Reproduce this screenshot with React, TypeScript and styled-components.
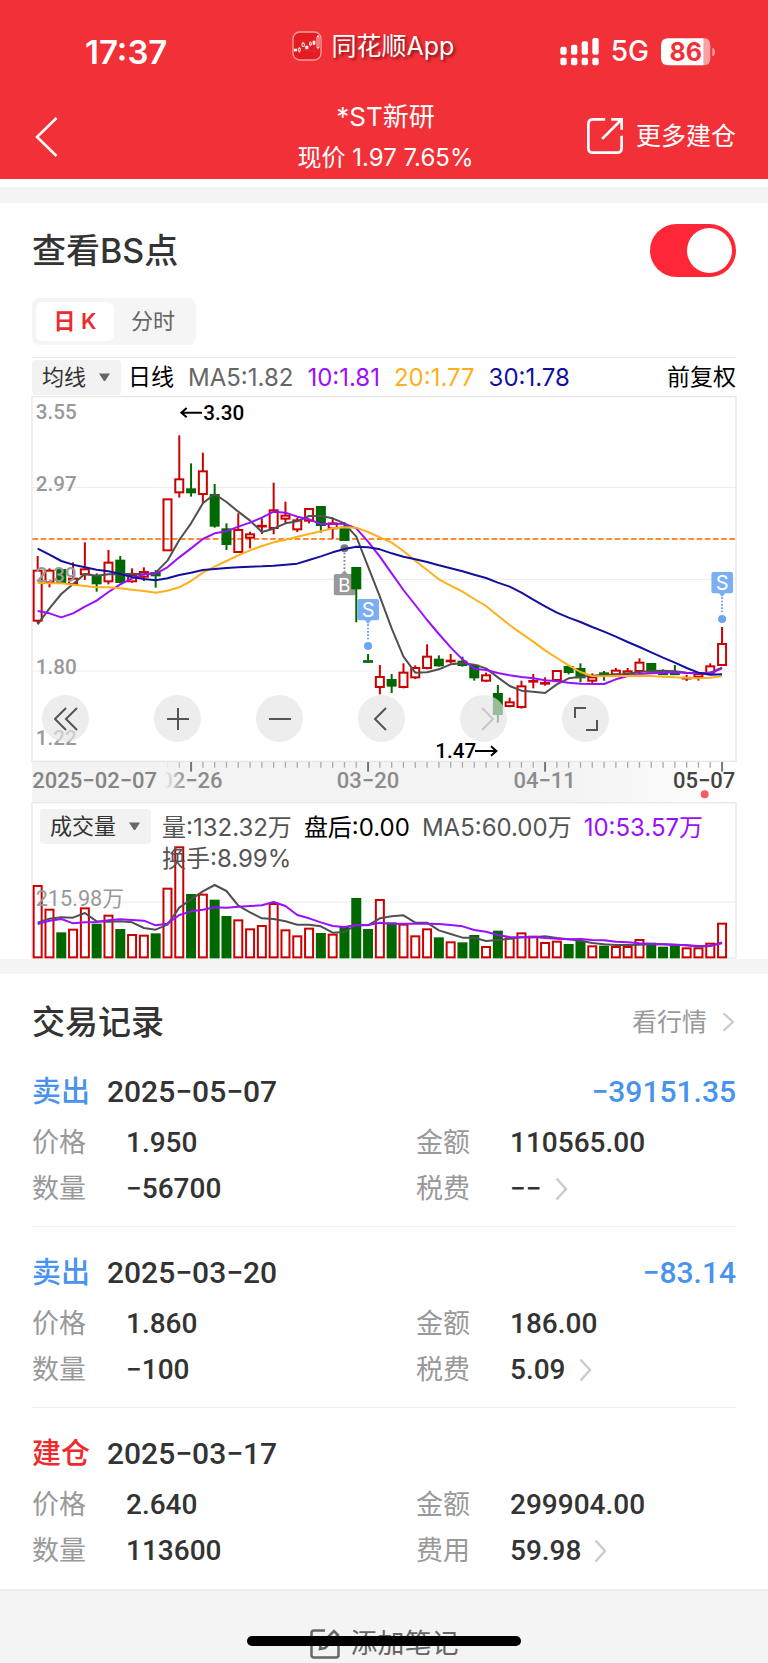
import React, { useState } from 'react';
import styled, { createGlobalStyle } from 'styled-components';

const GlobalStyle = createGlobalStyle`
  *, *::before, *::after { box-sizing: border-box; }
  body {
    margin: 0;
    background: #fff;
    color: #333;
    font-family: Inter, "Noto Sans CJK SC", sans-serif;
    line-height: 1.2;
  }
  button, select { font: inherit; color: inherit; border: 0; background: none; padding: 0; margin: 0; cursor: pointer; }
  a { color: inherit; text-decoration: none; }
  h1, h2, p, dl, dd, dt { margin: 0; font-weight: 400; }
`;

const NUM_FONT = 'Roboto, "Noto Sans CJK SC", sans-serif';
const RED = '#cc0000';
const GREEN = '#006800';
const MA_GRAY = '#505050';
const MA_PURPLE = '#9b0fff';
const MA_ORANGE = '#ffb01a';
const MA_NAVY = '#1310a0';

/* ---------- header ---------- */

const Header = styled.header`
  background: #f23038;
  color: #fff;
`;

const StatusBar = styled.div`
  display: grid;
  grid-template-columns: 208fr 268fr auto;
  align-items: center;
  height: 95px;
  padding: 8px 52px 0 85px;
`;

const Clock = styled.time`
  font-size: 33px;
  font-weight: 600;
  line-height: 40px;
`;

const AppBadge = styled.div`
  display: flex;
  align-items: center;
  gap: 9px;
  padding-bottom: 12px;
  font-size: 25px;
  line-height: 32px;
  text-shadow: 2px 2px 3px rgba(60, 0, 0, 0.6);
`;

const StatusIcons = styled.div`
  display: flex;
  align-items: center;
  gap: 12px;
  font-size: 28px;
  font-weight: 500;
`;

const NavBar = styled.nav`
  display: grid;
  grid-template-columns: 1fr auto 1fr;
  align-items: center;
  height: 84px;
  padding: 0 32px 0 35px;
`;

const BackButton = styled.button`
  display: flex;
  justify-self: start;
`;

const StockTitle = styled.div`
  text-align: center;
  h1 { font-size: 26px; line-height: 42px; }
  p { font-size: 24px; line-height: 40px; }
`;

const MoreLink = styled.a`
  display: flex;
  align-items: center;
  justify-self: end;
  gap: 13px;
  padding-bottom: 2px;
  font-size: 25px;
`;

/* ---------- sections ---------- */

const Band = styled.div<{ $top?: boolean }>`
  height: ${(p) => (p.$top ? 24 : 15)}px;
  border-top: ${(p) => (p.$top ? '8px solid #fff' : '0')};
  background: #f4f4f4;
`;

const Section = styled.section`
  padding: 0 32px;
`;

const SwitchRow = styled.label`
  display: flex;
  align-items: center;
  justify-content: space-between;
  padding-top: 21px;
  font-size: 34px;
  font-weight: 500;
  line-height: 53px;
`;

const Toggle = styled.input`
  appearance: none;
  width: 86px;
  height: 53px;
  margin: 0;
  padding: 4px;
  border-radius: 27px;
  background: #ccc;
  cursor: pointer;
  display: flex;
  &::before {
    content: '';
    width: 45px;
    height: 45px;
    border-radius: 50%;
    background: #fff;
  }
  &:checked { background: #ff2737; justify-content: flex-end; }
`;

const Tabs = styled.div`
  display: inline-flex;
  margin: 21px 0 12px;
  padding: 4px;
  border-radius: 8px;
  background: #f5f5f5;
  vertical-align: top;
`;

const Tab = styled.button<{ $active: boolean }>`
  width: 78px;
  height: 39px;
  border-radius: 6px;
  font-size: 22px;
  font-weight: ${(p) => (p.$active ? 600 : 400)};
  color: ${(p) => (p.$active ? '#ee2a2e' : '#666')};
  background: ${(p) => (p.$active ? '#fff' : 'transparent')};
`;

const Legend = styled.div`
  display: flex;
  align-items: center;
  height: 39px;
  border-top: 1px solid #e8e8e8;
  gap: 14px;
`;

const LegendItem = styled.span<{ $color: string; $small?: boolean; $push?: boolean }>`
  color: ${(p) => p.$color};
  font-size: ${(p) => (p.$small ? 23 : 24)}px;
  line-height: 31px;
  white-space: nowrap;
  margin-left: ${(p) => (p.$push ? 'auto' : '0')};
`;

const Picker = styled.span<{ $tight?: boolean }>`
  display: grid;
  align-items: center;
  height: 35px;
  border-radius: 4px;
  background: #f2f2f2;
  margin-right: ${(p) => (p.$tight ? '-7px' : '0')};
  & > * { grid-area: 1 / 1; }
  select {
    appearance: none;
    height: 35px;
    padding: 0 34px 0 10px;
    font-size: 22px;
    color: #333;
  }
  svg { justify-self: end; margin-right: 10px; pointer-events: none; }
`;

/* ---------- charts ---------- */

const ChartBlock = styled.div`
  margin: 0 -1px;
`;

const Stack = styled.div`
  display: grid;
  & > * { grid-area: 1 / 1; min-width: 0; }
`;

const ChartSvg = styled.svg`
  display: block;
  width: 100%;
  height: auto;
  overflow: visible;
`;

const ChartControls = styled.div`
  display: flex;
  align-self: end;
  gap: 55px;
  padding: 0 0 20px 11px;
`;

const RoundButton = styled.button`
  display: flex;
  width: 47px;
  height: 47px;
  border-radius: 50%;
  background: rgba(228, 228, 228, 0.68);
  color: #555;
  align-items: center;
  justify-content: center;
  &:first-child { margin-right: 10px; }
  &:disabled { color: #c8c8c8; }
`;

const VolumeHead = styled.div`
  display: flex;
  align-items: flex-start;
  align-self: start;
  gap: 11px;
  padding: 7px 10px 0 9px;
`;

const VolumeStats = styled.div`
  display: flex;
  flex-wrap: wrap;
  column-gap: 12px;
  padding-top: 3px;
`;

/* ---------- records ---------- */

const RecordsHead = styled.div`
  display: flex;
  align-items: center;
  justify-content: space-between;
  padding: 28px 0 4px;
  line-height: 40px;
  h2 { font-size: 33px; font-weight: 500; }
  a { display: flex; align-items: center; gap: 15px; font-size: 25px; color: #999; padding-right: 1px; }
`;

const RecordItem = styled.article`
  padding: 26px 0 14px;
  border-bottom: 1px solid #efefef;
  &:last-child { border-color: transparent; }
`;

const RecordTop = styled.div`
  display: flex;
  align-items: center;
  gap: 17px;
  line-height: 40px;
  margin-bottom: 8px;
  font-family: ${NUM_FONT};
  font-size: 30px;
  font-weight: 500;
`;

const Action = styled.span<{ $color: string }>`
  color: ${(p) => p.$color};
  font-size: 29px;
`;

const Profit = styled.span`
  margin-left: auto;
  color: #4793ee;
`;

const Fields = styled.dl`
  display: grid;
  grid-template-columns: 6fr 5fr;
`;

const Field = styled.div`
  display: flex;
  align-items: center;
  line-height: 46px;
  dt { width: 94px; font-size: 27px; color: #999; }
  dd {
    display: flex;
    align-items: center;
    gap: 13px;
    font-family: ${NUM_FONT};
    font-size: 28px;
    font-weight: 500;
  }
`;

const Footer = styled.footer`
  position: relative;
  display: flex;
  justify-content: center;
  align-items: flex-end;
  height: 74px;
  background: #f4f4f4;
  border-top: 2px solid #efefef;
`;

const NoteButton = styled.button`
  display: flex;
  align-items: center;
  gap: 11px;
  height: 38px;
  font-size: 27px;
  color: #666;
`;

const HomeIndicator = styled.div`
  position: absolute;
  bottom: 17px;
  left: 50%;
  width: 274px;
  height: 10px;
  margin-left: -137px;
  border-radius: 5px;
  background: #000;
`;

/* ---------- data ---------- */

// Chart drawings use three units to a pixel; days are STEP units apart.
const STEP = 35.4;
const dayX = (i: number) => 20 + i * STEP;

type Candle = [dir: 'r' | 'g', high: number, top: number, bottom: number, low: number];

const CANDLES: Candle[] = [
  ['r', 498, 542, 692, 700], ['r', 535, 542, 577, 592], ['g', 540, 540, 577, 577], ['r', 517, 566, 582, 585],
  ['r', 457, 538, 553, 570], ['g', 550, 558, 580, 605], ['r', 480, 518, 574, 583], ['g', 498, 512, 576, 580],
  ['r', 535, 555, 574, 578], ['r', 532, 546, 560, 573], ['g', 540, 549, 556, 593], ['r', 328, 328, 481, 481],
  ['r', 136, 268, 307, 323], ['g', 220, 298, 307, 320], ['r', 188, 244, 312, 340], ['g', 282, 315, 407, 413],
  ['g', 400, 418, 462, 480], ['r', 370, 420, 486, 489], ['r', 425, 433, 443, 475], ['r', 385, 407, 410, 432],
  ['r', 278, 361, 414, 433], ['r', 335, 377, 386, 400], ['r', 383, 391, 418, 426], ['r', 355, 357, 392, 400],
  ['g', 351, 351, 405, 428], ['r', 383, 400, 415, 446], ['g', 397, 413, 450, 450], ['g', 534, 534, 595, 697],
  ['g', 792, 812, 817, 817], ['r', 825, 861, 891, 913], ['g', 852, 870, 887, 909], ['r', 820, 848, 891, 895],
  ['r', 826, 834, 862, 867], ['r', 763, 800, 834, 838], ['g', 796, 809, 826, 830], ['r', 792, 812, 814, 820],
  ['g', 800, 815, 825, 830], ['g', 825, 827, 862, 872], ['r', 848, 856, 872, 876], ['g', 885, 912, 972, 998],
  ['r', 923, 937, 948, 952], ['r', 872, 889, 951, 956], ['r', 852, 872, 876, 895], ['r', 862, 878, 882, 887],
  ['r', 843, 843, 870, 870], ['g', 827, 831, 846, 853], ['g', 820, 837, 862, 877], ['r', 850, 862, 872, 884],
  ['g', 843, 850, 856, 872], ['r', 834, 842, 853, 855], ['r', 834, 844, 851, 855], ['r', 805, 818, 843, 846],
  ['g', 822, 822, 845, 845], ['g', 838, 849, 854, 854], ['g', 825, 849, 854, 854], ['r', 855, 862, 867, 873],
  ['r', 850, 853, 861, 872], ['r', 820, 829, 848, 850], ['r', 711, 762, 825, 825],
];

const MA5 = [703, 655, 612, 582, 552, 557, 553, 553, 551, 553, 548, 512, 450, 400, 340, 312, 336, 365, 392, 426, 416, 400, 394, 378, 378, 385, 400, 440, 530, 620, 715, 800, 848, 847, 838, 823, 820, 824, 835, 862, 888, 902, 905, 909, 883, 865, 860, 857, 854, 854, 852, 846, 843, 842, 844, 848, 850, 848, 833];
const MA10 = [663, 670, 682, 670, 650, 632, 606, 583, 565, 553, 551, 532, 502, 475, 447, 430, 424, 410, 398, 383, 365, 368, 380, 388, 402, 402, 401, 415, 455, 500, 550, 600, 645, 690, 732, 772, 808, 836, 840, 849, 856, 861, 865, 871, 874, 878, 881, 882, 882, 868, 858, 852, 850, 848, 847, 849, 850, 850, 835];
const MA20 = [579, 580, 580, 584, 588, 592, 592, 595, 599, 603, 608, 602, 592, 573, 548, 530, 513, 496, 481, 468, 457, 449, 440, 432, 424, 415, 412, 413, 426, 442, 458, 483, 512, 540, 568, 587, 605, 627, 648, 677, 705, 731, 755, 781, 804, 826, 846, 858, 859, 858, 858, 857, 858, 860, 862, 863, 865, 863, 859];
const MA30 = [476, 494, 513, 524, 532, 539, 544, 552, 561, 567, 571, 565, 555, 548, 540, 537, 534, 532, 530, 529, 527, 524, 521, 510, 499, 487, 477, 470, 472, 478, 490, 500, 508, 516, 526, 535, 544, 554, 564, 578, 590, 608, 629, 649, 668, 683, 696, 711, 725, 740, 756, 771, 787, 803, 818, 834, 848, 854, 853];

const VOLUME_TOPS = [706, 777, 848, 837, 773, 822, 795, 838, 853, 855, 851, 714, 590, 733, 732, 750, 799, 809, 836, 826, 760, 839, 857, 834, 850, 852, 831, 745, 838, 748, 818, 822, 857, 836, 863, 875, 878, 856, 889, 843, 863, 848, 858, 877, 873, 883, 873, 887, 888, 889, 889, 868, 879, 891, 887, 893, 893, 879, 819];
const VOLUME_MA5 = [818, 806, 802, 803, 789, 814, 815, 814, 817, 834, 839, 824, 773, 748, 724, 705, 723, 767, 787, 805, 807, 814, 824, 824, 829, 848, 846, 825, 826, 805, 799, 796, 818, 818, 841, 852, 863, 863, 873, 870, 866, 862, 862, 859, 864, 868, 872, 879, 883, 885, 885, 884, 882, 883, 884, 886, 890, 888, 877];
const VOLUME_MA10 = [822, 812, 807, 820, 817, 816, 811, 808, 810, 812, 826, 821, 795, 784, 779, 772, 773, 770, 768, 766, 756, 768, 795, 805, 817, 828, 831, 825, 825, 818, 822, 821, 821, 821, 822, 825, 829, 840, 845, 855, 861, 862, 861, 864, 866, 868, 867, 870, 871, 875, 877, 880, 882, 883, 884, 886, 888, 887, 880];

interface TradeRecord {
  action: string;
  color: string;
  date: string;
  profit?: string;
  price: string;
  amount: string;
  quantity: string;
  feeLabel: string;
  fee: string;
}

const RECORDS: TradeRecord[] = [
  { action: '卖出', color: '#4793ee', date: '2025−05−07', profit: '−39151.35', price: '1.950', amount: '110565.00', quantity: '−56700', feeLabel: '税费', fee: '−−' },
  { action: '卖出', color: '#4793ee', date: '2025−03−20', profit: '−83.14', price: '1.860', amount: '186.00', quantity: '−100', feeLabel: '税费', fee: '5.09' },
  { action: '建仓', color: '#ee2a2e', date: '2025−03−17', price: '2.640', amount: '299904.00', quantity: '113600', feeLabel: '费用', fee: '59.98' },
];

/* ---------- drawings ---------- */

const linePoints = (values: number[]) => values.map((y, i) => `${dayX(i)},${y}`).join(' ');

const MaLine = ({ values, color }: { values: number[]; color: string }) => (
  <polyline points={linePoints(values)} fill="none" stroke={color} strokeWidth={6} strokeLinejoin="round" />
);

const Caret = () => (
  <svg width="13" height="9" viewBox="0 0 13 9" aria-hidden="true">
    <path d="M1 .5h11L7.500 7.500q-1 1-2 0z" fill="#666" />
  </svg>
);

const Chevron = ({ height }: { height: number }) => (
  <svg width="13" height={height} viewBox="0 0 13 24" preserveAspectRatio="none" fill="none" stroke="#ccc" strokeWidth="2.500" aria-hidden="true">
    <path d="M1.500 1.500 11 12 1.500 22.500" />
  </svg>
);

const AppLogo = () => (
  <svg width="30" height="30" viewBox="0 0 90 90" aria-hidden="true">
    <rect x="3" y="3" width="84" height="84" rx="20" fill="#e41c22" stroke="#ff9da0" strokeWidth="4" />
    <path d="M5 30h80M5 60h80M66 5v80" stroke="#ea3539" strokeWidth="1.500" />
    <g fill="#fff">
      <path d="M6 53h9v8H6zM40 44h9v11h-9zM62 29h8v12h-8z" />
    </g>
    <g fill="none" stroke="#fff" strokeWidth="2.500">
      <path d="M19 52h6v8h-6zM22 48v4M22 60v5M30 37h7v9h-7zM33 33v4M53 35h5v7h-5zM55 32v3M55 42v4M75 17h6v33h-6zM78 12v5M78 50v5" />
    </g>
  </svg>
);

const Signal = () => (
  <svg width="39" height="28" viewBox="0 0 117 84" fill="#fff" aria-hidden="true">
    {[26, 20, 10, 0].map((top, i) => (
      <g key={top}>
        <rect x={1 + i * 32} y={top} width="19" height={50 - top} rx="6" />
        <rect x={1 + i * 32} y="59" width="19" height="23" rx="6" />
      </g>
    ))}
  </svg>
);

const Battery = () => (
  <svg width="55" height="28" viewBox="0 0 165 84" aria-label="86%">
    <path d="M128 1h2q18 0 18 22v38q0 21-18 21h-2z" fill="#fba0a3" />
    <path d="M22 1h106v81H22Q0 82 0 61V23Q0 1 22 1z" fill="#fff" />
    <path d="M154 29q8 3 8 13t-8 13z" fill="#fba0a3" />
    <text x="74" y="68" textAnchor="middle" fontFamily="Inter" fontWeight="700" fontSize="75" fill="#f23038">86</text>
  </svg>
);

const ExportIcon = () => (
  <svg width="36" height="36" viewBox="0 0 107 107" fill="none" stroke="#fff" strokeWidth="8" aria-hidden="true">
    <path d="M54 4H18Q4 4 4 18v71q0 14 14 14h71q14 0 14-14V53M45 62 102 5M72 4h31v31" />
  </svg>
);

const NoteIcon = () => (
  <svg width="30" height="30" viewBox="0 0 30 30" fill="none" stroke="#666" strokeWidth="2.500" aria-hidden="true">
    <path d="M15 1.500H4Q1.500 1.500 1.500 4v22q0 2.500 2.500 2.500h22q2.500 0 2.500-2.500V13" />
    <path d="M10 20l1-5L24 2l4 4-13 13z" />
  </svg>
);

const SMarker = ({ x, y }: { x: number; y: number }) => (
  <g>
    <rect x={x - 32} y={y} width="65" height="64" rx="6" fill="#7baef3" />
    <path d={`M${x - 10} ${y + 63}h20l-10 12z`} fill="#7baef3" />
    <line x1={x} x2={x} y1={y + 76} y2={y + 124} stroke="#68a5f2" strokeWidth="6" strokeDasharray="5 5" />
    <circle cx={x} cy={y + 141} r="12" fill="#68a5f2" />
    <text x={x} y={y + 54} textAnchor="middle" fontFamily="Inter" fontSize="60" fill="#fff">S</text>
  </g>
);

const BMarker = ({ x }: { x: number }) => (
  <g>
    <circle cx={x} cy="475" r="12" fill="#777" />
    <line x1={x} x2={x} y1="488" y2="540" stroke="#888" strokeWidth="6" strokeDasharray="5 6" />
    <path d={`M${x - 10} 553h20l-10-12z`} fill="#999" />
    <rect x={x - 32} y="552" width="66" height="64" rx="6" fill="#999" />
    <text x={x} y="605" textAnchor="middle" fontFamily="Inter" fontSize="56" fill="#fff">B</text>
  </g>
);

const CandleShape = ({ index, candle }: { index: number; candle: Candle }) => {
  const [dir, high, top, bottom, low] = candle;
  const x = dayX(index);
  const color = dir === 'r' ? RED : GREEN;
  const thin = bottom - top < 6;
  return (
    <g stroke={color} strokeWidth="6" fill="none">
      {high < top && <line x1={x} x2={x} y1={high} y2={top} />}
      {low > bottom && <line x1={x} x2={x} y1={bottom} y2={low} />}
      {thin ? (
        <line x1={x - 15} x2={x + 15} y1={(top + bottom) / 2} y2={(top + bottom) / 2} strokeWidth="8" />
      ) : (
        <rect x={x - 12} y={top} width="24" height={bottom - top} fill={dir === 'g' ? GREEN : 'none'} />
      )}
    </g>
  );
};

const PRICE_LABELS: [string, number][] = [['3.55', 86], ['2.97', 302], ['2.39', 577], ['1.80', 851], ['1.22', 1066]];

const PriceChart = () => (
  <ChartSvg viewBox="0 18 2118 1098" role="img" aria-label="日K">
    <rect x="3" y="20" width="2112" height="1094" fill="none" stroke="#e8e8e8" strokeWidth="4" />
    {[293, 568, 843].map((y) => (
      <line key={y} x1="4" x2="2114" y1={y} y2={y} stroke="#ebebeb" strokeWidth="3" />
    ))}
    <line x1="4" x2="2116" y1="447" y2="447" stroke="#ff8c34" strokeWidth="6" strokeDasharray="17 7.600" />
    <BMarker x={dayX(26)} />
    {CANDLES.map((candle, i) => (
      <CandleShape key={i} index={i} candle={candle} />
    ))}
    <g fontFamily="Roboto" fontSize="62" fontWeight="500" fill="#999">
      {PRICE_LABELS.map(([label, y]) => (
        <text key={label} x="14" y={y}>{label}</text>
      ))}
    </g>
    <MaLine values={MA5} color={MA_GRAY} />
    <MaLine values={MA10} color={MA_PURPLE} />
    <MaLine values={MA20} color={MA_ORANGE} />
    <MaLine values={MA30} color={MA_NAVY} />
    <SMarker x={dayX(28)} y={627} />
    <SMarker x={dayX(58)} y={546} />
    <g fontFamily="Roboto" fontSize="62" fontWeight="500" fill="#000">
      <text x="517" y="91">3.30</text>
      <text x="1213" y="1104">1.47</text>
    </g>
    <path d="M513 68h-62m16-14-16 14 16 14M1332 1083h64m-16-14 16 14-16 14" fill="none" stroke="#000" strokeWidth="6" />
  </ChartSvg>
);

const DATE_LABELS: [string, number, string][] = [
  ['02−26', 481, '#8c8c8c'],
  ['03−20', 1011, '#8c8c8c'],
  ['04−11', 1541, '#8c8c8c'],
];

const DateAxis = () => (
  <ChartSvg viewBox="0 1116 2118 120" role="img" aria-label="日期">
    <defs>
      <linearGradient id="axisBand" x1="0" x2="1" y1="0" y2="0">
        <stop offset="0" stopColor="#f3f3f3" />
        <stop offset="0.750" stopColor="#f3f3f3" />
        <stop offset="1" stopColor="#ffffff" />
      </linearGradient>
      <linearGradient id="axisFade" x1="0" x2="1" y1="0" y2="0">
        <stop offset="0" stopColor="#f3f3f3" />
        <stop offset="0.860" stopColor="#f3f3f3" />
        <stop offset="1" stopColor="#f3f3f3" stopOpacity="0" />
      </linearGradient>
    </defs>
    <rect x="4" y="1116" width="2112" height="120" fill="url(#axisBand)" />
    {CANDLES.map((_, i) => {
      const major = [13, 28, 43, 58].includes(i);
      return (
        <line key={i} x1={dayX(i)} x2={dayX(i)} y1="1116" y2={major ? 1145 : 1133} stroke={major ? '#777' : '#aaa'} strokeWidth={major ? 6 : 4} />
      );
    })}
    <g fontFamily="Roboto" fontSize="66" fontWeight="500" textAnchor="middle">
      {DATE_LABELS.map(([label, x, color]) => (
        <text key={label} x={x} y="1194" fill={color}>{label}</text>
      ))}
      <rect x="4" y="1116" width="460" height="120" fill="url(#axisFade)" />
      <text x="4" y="1194" fill="#858585" textAnchor="start">2025−02−07</text>
      <text x="2113" y="1194" fill="#444" textAnchor="end">05−07</text>
    </g>
    <circle cx="2021" cy="1213" r="12" fill="#f75c62" />
  </ChartSvg>
);

const VolumeChart = () => (
  <ChartSvg viewBox="0 456 2118 471" role="img" aria-label="成交量">
    <rect x="3" y="458" width="2112" height="466" fill="none" stroke="#e8e8e8" strokeWidth="4" />
    <line x1="4" x2="2114" y1="756" y2="756" stroke="#ebebeb" strokeWidth="3" />
    {VOLUME_TOPS.map((top, i) => {
      const red = CANDLES[i][0] === 'r';
      return (
        <rect key={i} x={dayX(i) - 12} y={top + 2} width="24" height={920 - top} fill={red ? 'none' : GREEN} stroke={red ? RED : GREEN} strokeWidth="6" />
      );
    })}
    <text x="14" y="767" fontFamily={NUM_FONT} fontSize="65" fill="#999">215.98万</text>
    <MaLine values={VOLUME_MA5} color={MA_GRAY} />
    <MaLine values={VOLUME_MA10} color={MA_PURPLE} />
  </ChartSvg>
);

/* ---------- page ---------- */

const CONTROLS: { label: string; d: string; disabled?: boolean }[] = [
  { label: '最早', d: 'M12 1 1 12 12 23M23 1 12 12 23 23' },
  { label: '放大', d: 'M1 12h22M12 1v22' },
  { label: '缩小', d: 'M1 12h22' },
  { label: '向前', d: 'M16 1 5 12 16 23' },
  { label: '向后', d: 'M10 1 21 12 10 23', disabled: true },
  { label: '全屏', d: 'M1 11V1H12M23 13V23H12' },
];

const RecordCard = ({ record }: { record: TradeRecord }) => (
  <RecordItem>
    <RecordTop>
      <Action $color={record.color}>{record.action}</Action>
      <time>{record.date}</time>
      {record.profit && <Profit>{record.profit}</Profit>}
    </RecordTop>
    <Fields>
      <Field><dt>价格</dt><dd>{record.price}</dd></Field>
      <Field><dt>金额</dt><dd>{record.amount}</dd></Field>
      <Field><dt>数量</dt><dd>{record.quantity}</dd></Field>
      <Field><dt>{record.feeLabel}</dt><dd>{record.fee}<Chevron height={24} /></dd></Field>
    </Fields>
  </RecordItem>
);

export default function App() {
  const [showPoints, setShowPoints] = useState(true);
  const [tab, setTab] = useState('日 K');

  return (
    <>
      <GlobalStyle />
      <Header>
        <StatusBar>
          <Clock>17:37</Clock>
          <AppBadge><AppLogo />同花顺App</AppBadge>
          <StatusIcons><Signal />5G<Battery /></StatusIcons>
        </StatusBar>
        <NavBar>
          <BackButton aria-label="返回">
            <svg width="23" height="40" viewBox="0 0 23 40" fill="none" stroke="#fff" strokeWidth="2.500" aria-hidden="true">
              <path d="M21.500 1 2 20l19.500 19" />
            </svg>
          </BackButton>
          <StockTitle>
            <h1>*ST新研</h1>
            <p>现价 1.97 7.65%</p>
          </StockTitle>
          <MoreLink href="#more"><ExportIcon />更多建仓</MoreLink>
        </NavBar>
      </Header>
      <Band $top />

      <Section>
        <SwitchRow>
          查看BS点
          <Toggle type="checkbox" role="switch" checked={showPoints} onChange={(e) => setShowPoints(e.target.checked)} />
        </SwitchRow>
        <Tabs>
          {['日 K', '分时'].map((name) => (
            <Tab key={name} $active={tab === name} onClick={() => setTab(name)}>{name}</Tab>
          ))}
        </Tabs>
        <Legend>
          <Picker $tight>
            <select aria-label="指标"><option>均线</option></select>
            <Caret />
          </Picker>
          <LegendItem $color="#000" $small>日线</LegendItem>
          <LegendItem $color="#666">MA5:1.82</LegendItem>
          <LegendItem $color={MA_PURPLE}>10:1.81</LegendItem>
          <LegendItem $color={MA_ORANGE}>20:1.77</LegendItem>
          <LegendItem $color={MA_NAVY}>30:1.78</LegendItem>
          <LegendItem $color="#000" $small $push>前复权</LegendItem>
        </Legend>
        <ChartBlock>
          <Stack>
            <PriceChart />
            <ChartControls>
              {CONTROLS.map((c) => (
                <RoundButton key={c.label} aria-label={c.label} disabled={c.disabled}>
                  <svg width="24" height="24" viewBox="0 0 24 24" fill="none" stroke="currentColor" strokeWidth="2" aria-hidden="true">
                    <path d={c.d} />
                  </svg>
                </RoundButton>
              ))}
            </ChartControls>
          </Stack>
          <DateAxis />
          <Stack>
            <VolumeChart />
            <VolumeHead>
              <Picker>
                <select aria-label="副图指标"><option>成交量</option></select>
                <Caret />
              </Picker>
              <VolumeStats>
                <LegendItem $color="#555">量:132.32万</LegendItem>
                <LegendItem $color="#000">盘后:0.00</LegendItem>
                <LegendItem $color="#555">MA5:60.00万</LegendItem>
                <LegendItem $color={MA_PURPLE}>10:53.57万</LegendItem>
                <LegendItem $color="#555">换手:8.99%</LegendItem>
              </VolumeStats>
            </VolumeHead>
          </Stack>
        </ChartBlock>
      </Section>
      <Band />

      <Section>
        <RecordsHead>
          <h2>交易记录</h2>
          <a href="#quote">看行情<Chevron height={20} /></a>
        </RecordsHead>
        <div>
          {RECORDS.map((record) => (
            <RecordCard key={record.date} record={record} />
          ))}
        </div>
      </Section>
      <Footer>
        <NoteButton><NoteIcon />添加笔记</NoteButton>
        <HomeIndicator />
      </Footer>
    </>
  );
}
